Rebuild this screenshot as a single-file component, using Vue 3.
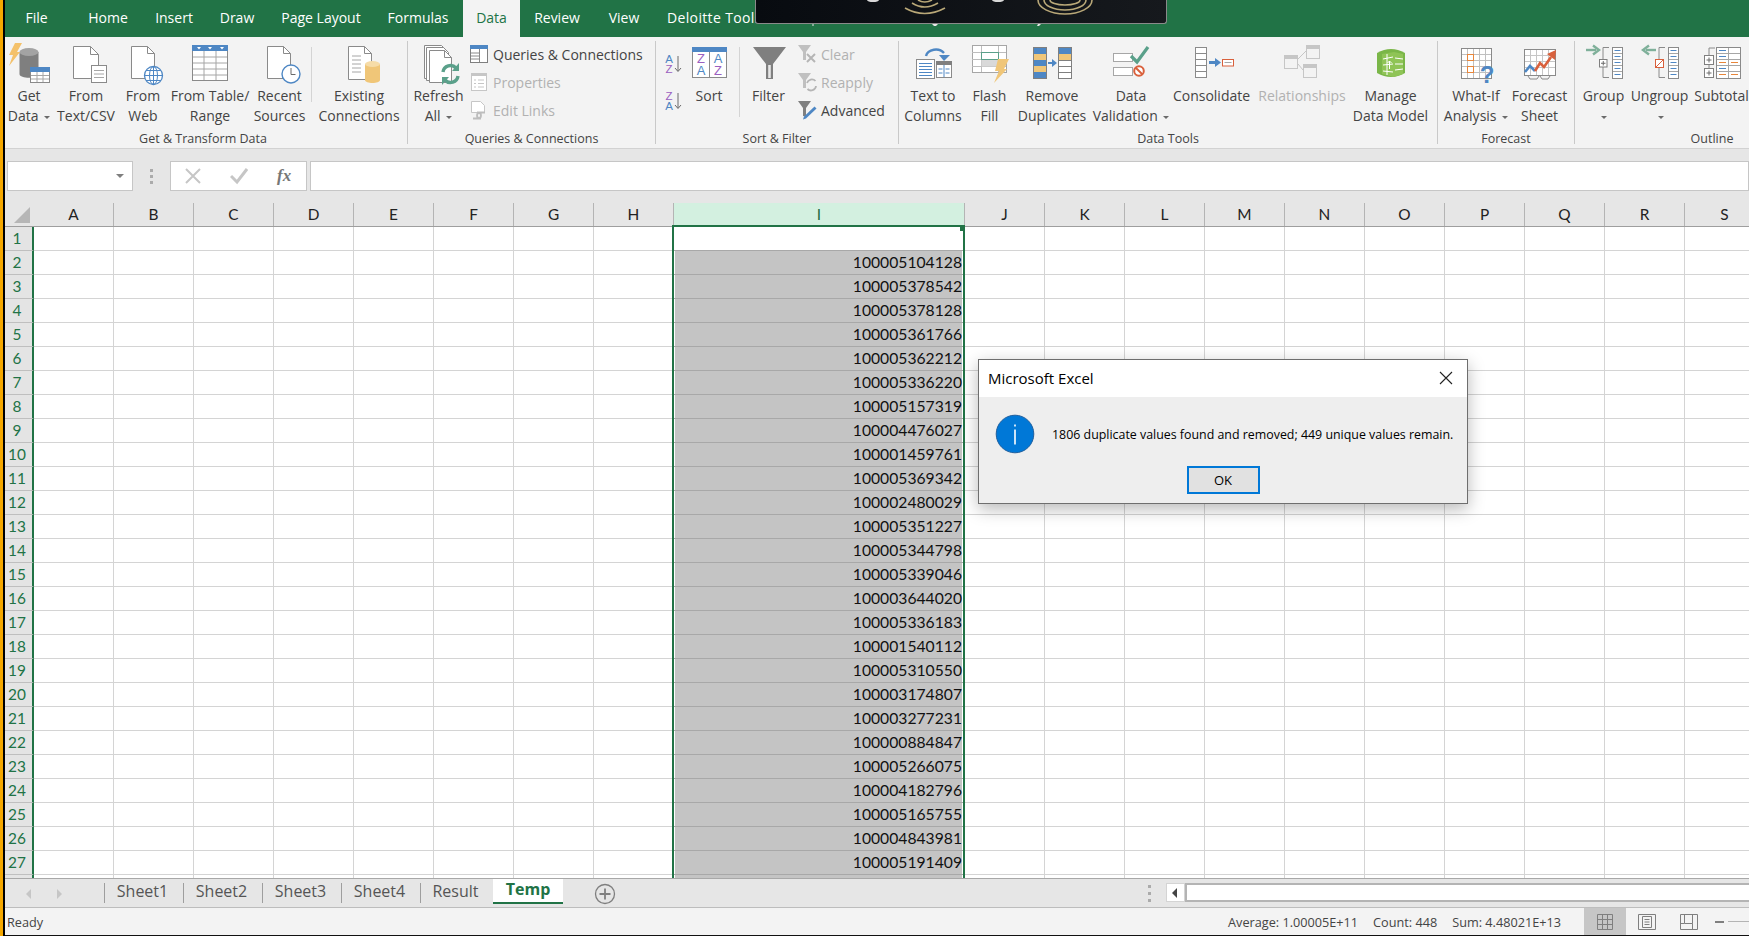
<script setup>
const tabs = [
  { t: 'File', w: 63 }, { t: 'Home', w: 80 }, { t: 'Insert', w: 52 }, { t: 'Draw', w: 74 },
  { t: 'Page Layout', w: 94 }, { t: 'Formulas', w: 95, pl: 5 }, { t: 'Data', w: 57, active: true },
  { t: 'Review', w: 74 }, { t: 'View', w: 60 }, { t: 'Deloitte Tools', w: 120, pl: 13, left: true }
]
const cols = ['A','B','C','D','E','F','G','H','I','J','K','L','M','N','O','P','Q','R','S']
const values = ['', '100005104128','100005378542','100005378128','100005361766','100005362212','100005336220','100005157319','100004476027','100001459761','100005369342','100002480029','100005351227','100005344798','100005339046','100003644020','100005336183','100001540112','100005310550','100003174807','100003277231','100000884847','100005266075','100004182796','100005165755','100004843981','100005191409','']
const sheets = ['Sheet1','Sheet2','Sheet3','Sheet4','Result']
const stripes = [0, 1, 2, 3, 4]
</script>

<template>
  <div class="app">
    <div class="edge"></div>
    <div class="main">
      <header class="titlebar">
        <div
          v-for="tab in tabs" :key="tab.t"
          class="tab" :class="{ active: tab.active, left: tab.left }"
          :style="{ width: tab.w + 'px', paddingLeft: (tab.pl || 0) + 'px' }"
        >{{ tab.t }}</div>
        <div class="overlay">
          <svg class="overlay-art" width="412" height="27" viewBox="755 0 412 27">
            <g fill="none" stroke="#b9a878" stroke-width="1.6">
              <path d="M904 8Q923.5 19 944 8M911 3Q923.5 11 937 3M917 0Q923.5 4 931 0"/>
              <path d="M1037 0a27 14 0 0 0 54 0M1043 0a21 10 0 0 0 42 0M1049 0a15 5 0 0 0 30 0"/>
            </g>
            <ellipse cx="872" cy="0" rx="6" ry="2" fill="#d8d8d8"/>
            <ellipse cx="997" cy="0" rx="6" ry="2" fill="#d8d8d8"/>
            <path d="M811.5 24h1v2h-1zM931 24h6l-2 2h-2zM1037 24h3l-2 2h-2z" fill="#e8e8e8"/>
          </svg>
        </div>
      </header>

      <section class="ribbon">
        <!-- Get & Transform Data -->
        <div class="group g1">
          <div class="btns">
            <div class="big w-get">
              <svg class="ico" viewBox="0 0 44 45">
                <path d="M12.5 11v22c0 5 19 5 19 0V11z" fill="#7f7f7f"/>
                <ellipse cx="22" cy="11" rx="9.5" ry="4" fill="#a3a3a3"/>
                <polygon points="8,2 15,2 10,11 13,11 2,25 6,14 2,14" fill="#f4c16a"/>
                <rect x="23.5" y="26.5" width="19" height="15" fill="#fff" stroke="#8a8a8a"/>
                <rect x="23" y="26" width="20" height="5" fill="#4e87c4"/>
                <path d="M30 31v10M36 31v10M24 34.5h18M24 38h18" stroke="#a6a6a6" fill="none"/>
              </svg>
              <span class="lbl">Get<br>Data <i class="caret"></i></span>
            </div>
            <div class="big w-text">
              <svg class="ico" viewBox="0 0 44 45">
                <path d="M9.5 5.5h17l8 8v24h-25z" fill="#fff" stroke="#8a8a8a"/>
                <path d="M26.5 5.5v8h8" fill="none" stroke="#8a8a8a"/>
                <rect x="27.5" y="24.5" width="15" height="17" fill="#fff" stroke="#8a8a8a"/>
                <path d="M30 29.5h10M30 33h10M30 36.5h10" stroke="#a6a6a6"/>
              </svg>
              <span class="lbl">From<br>Text/CSV</span>
            </div>
            <div class="big w-web">
              <svg class="ico" viewBox="0 0 44 45">
                <path d="M10.5 5.5h16l7 7v25h-23z" fill="#fff" stroke="#8a8a8a"/>
                <path d="M26.5 5.5v7h7" fill="none" stroke="#8a8a8a"/>
                <circle cx="32.5" cy="34.5" r="9" fill="#fff" stroke="#4e87c4" stroke-width="1.3"/>
                <ellipse cx="32.5" cy="34.5" rx="4" ry="9" fill="none" stroke="#4e87c4"/>
                <path d="M32.5 25.5v18M23.5 34.5h18M25 29.5h15M25 39.5h15" stroke="#4e87c4" fill="none"/>
              </svg>
              <span class="lbl">From<br>Web</span>
            </div>
            <div class="big w-table">
              <svg class="ico" viewBox="0 0 44 45">
                <rect x="4.5" y="4.5" width="35" height="35" fill="#fff" stroke="#8a8a8a"/>
                <rect x="4" y="4" width="36" height="6" fill="#4e87c4"/>
                <path d="M9 6h4l-2 2.5zM20 6h4l-2 2.5zM32 6h4l-2 2.5z" fill="#fff"/>
                <path d="M16 10v29M28 10v29M5 16h34M5 22h34M5 28h34M5 34h34" stroke="#a6a6a6" fill="none"/>
              </svg>
              <span class="lbl">From Table/<br>Range</span>
            </div>
            <div class="big w-recent">
              <svg class="ico" viewBox="0 0 44 45">
                <path d="M9.5 5.5h16l7 7v25h-23z" fill="#fff" stroke="#8a8a8a"/>
                <path d="M25.5 5.5v7h7" fill="none" stroke="#8a8a8a"/>
                <circle cx="33" cy="33" r="9" fill="#fff" stroke="#4e87c4" stroke-width="1.4"/>
                <path d="M33 27v6.5h4.5" fill="none" stroke="#6a6a6a"/>
              </svg>
              <span class="lbl">Recent<br>Sources</span>
            </div>
            <div class="vsep"></div>
            <div class="big w-exist">
              <svg class="ico" viewBox="0 0 44 45">
                <path d="M11.5 5.5h16l7 7v26h-23z" fill="#fff" stroke="#8a8a8a"/>
                <path d="M27.5 5.5v7h7" fill="none" stroke="#8a8a8a"/>
                <path d="M15 15h9M15 19h9M15 23h9M15 27h9M15 31h9" stroke="#a6a6a6"/>
                <path d="M28 23v16c0 4 15 4 15 0V23z" fill="#f0c678"/>
                <ellipse cx="35.5" cy="23" rx="7.5" ry="3" fill="#f6dca8"/>
              </svg>
              <span class="lbl">Existing<br>Connections</span>
            </div>
          </div>
          <div class="glabel">Get &amp; Transform Data</div>
        </div>

        <!-- Queries & Connections -->
        <div class="group g2">
          <div class="btns">
            <div class="big w-refresh">
              <svg class="ico" viewBox="0 0 44 45">
                <path d="M7.5 4.5h17l5 5v28h-22z" fill="#fff" stroke="#8a8a8a"/>
                <path d="M9.5 6.5h17l5 5v28h-22z" fill="#fff" stroke="#8a8a8a"/>
                <path d="M12.5 9.500h15l7 7v25h-22z" fill="#fff" stroke="#8a8a8a"/>
                <path d="M27.500 9.500v7h7" fill="none" stroke="#8a8a8a"/>
                <path d="M26 31a7.500 7.500 0 0 1 13-4" fill="none" stroke="#5aa08a" stroke-width="3.400"/>
                <path d="M41 35a7.500 7.500 0 0 1-13 4" fill="none" stroke="#5aa08a" stroke-width="3.400"/>
                <path d="M42 22v8h-7zM25 44v-8h7z" fill="#5aa08a"/>
              </svg>
              <span class="lbl">Refresh<br>All <i class="caret"></i></span>
            </div>
            <div class="smalls">
              <div class="small">
                <svg class="sico" viewBox="0 0 20 20">
                  <rect x="1.500" y="1.500" width="17" height="17" fill="#fff" stroke="#7f7f7f"/>
                  <rect x="1" y="1" width="18" height="4" fill="#4e87c4"/>
                  <path d="M10.500 5v13M2 9h8M2 12h8M2 15h8" stroke="#8a8a8a" fill="none"/>
                </svg>
                <span>Queries &amp; Connections</span>
              </div>
              <div class="small off">
                <svg class="sico" viewBox="0 0 20 20">
                  <rect x="2.500" y="1.500" width="15" height="17" fill="#fff" stroke="#c6c6c6"/>
                  <rect x="2" y="1" width="16" height="3" fill="#c6c6c6"/>
                  <path d="M5 8h2M9 8h6M5 11.500h2M9 11.500h6M5 15h2M9 15h6" stroke="#c6c6c6" fill="none"/>
                </svg>
                <span>Properties</span>
              </div>
              <div class="small off">
                <svg class="sico" viewBox="0 0 20 20">
                  <path d="M2.500 1.500h9l4 4v7h-13z" fill="#fff" stroke="#c6c6c6"/>
                  <path d="M4 18.500h5a3 3 0 0 0 0-6H8M16 12.500h-5a3 3 0 0 0 0 6h1" fill="none" stroke="#bdbdbd" stroke-width="1.800"/>
                </svg>
                <span>Edit Links</span>
              </div>
            </div>
          </div>
          <div class="glabel">Queries &amp; Connections</div>
        </div>

        <!-- Sort & Filter -->
        <div class="group g3">
          <div class="btns">
            <div class="azcol">
              <svg class="az" viewBox="0 0 20 22">
                <text x="6" y="10" class="azt blue">A</text>
                <text x="6" y="20" class="azt purple">Z</text>
                <path d="M15 3v15M12 15l3 3.500 3-3.500" fill="none" stroke="#6a6a6a"/>
              </svg>
              <svg class="az" viewBox="0 0 20 22">
                <text x="6" y="10" class="azt purple">Z</text>
                <text x="6" y="20" class="azt blue">A</text>
                <path d="M15 3v15M12 15l3 3.500 3-3.500" fill="none" stroke="#6a6a6a"/>
              </svg>
            </div>
            <div class="big w-sort">
              <svg class="ico" viewBox="0 0 44 45">
                <rect x="5.500" y="6.500" width="34" height="30" fill="#fff" stroke="#8a8a8a"/>
                <rect x="5" y="6" width="35" height="5" fill="#4e87c4"/>
                <path d="M22.500 11v25" stroke="#8a8a8a"/>
                <text x="14" y="22" class="sorttxt purple">Z</text>
                <text x="31" y="22" class="sorttxt blue">A</text>
                <text x="14" y="34" class="sorttxt blue">A</text>
                <text x="31" y="34" class="sorttxt purple">Z</text>
              </svg>
              <span class="lbl">Sort<br>&nbsp;</span>
            </div>
            <div class="vsep tall"></div>
            <div class="big w-filter">
              <svg class="ico" viewBox="0 0 44 45">
                <path d="M6 6h33L26 23v15h-7V23z" fill="#7f7f7f"/>
                <path d="M21.200 24v13h2.600V24z" fill="#e8e8e8"/>
              </svg>
              <span class="lbl">Filter<br>&nbsp;</span>
            </div>
            <div class="smalls">
              <div class="small">
                <svg class="sico" viewBox="0 0 20 20">
                  <path d="M1 1h13L9 8v8H6V8z" fill="#c0c0c0"/>
                  <path d="M10 10l8 8M18 10l-8 8" stroke="#b5b5b5" stroke-width="2"/>
                </svg>
                <span class="offt">Clear</span>
              </div>
              <div class="small">
                <svg class="sico" viewBox="0 0 20 20">
                  <path d="M1 1h13L9 8v8H6V8z" fill="#c0c0c0"/>
                  <path d="M10 11a5 5 0 0 1 8.500-2M19 14a5 5 0 0 1-8.500 3" fill="none" stroke="#b5b5b5" stroke-width="1.800"/>
                </svg>
                <span class="offt">Reapply</span>
              </div>
              <div class="small">
                <svg class="sico" viewBox="0 0 20 20">
                  <path d="M1 1h13L9 8v8H6V8z" fill="#7f7f7f"/>
                  <path d="M17.500 6.500l2 2L9 18.500l-3 1 1-3z" fill="#4e87c4"/>
                </svg>
                <span>Advanced</span>
              </div>
            </div>
          </div>
          <div class="glabel">Sort &amp; Filter</div>
        </div>

        <!-- Data Tools -->
        <div class="group g4">
          <div class="btns">
            <div class="big w-t2c">
              <svg class="ico" viewBox="0 0 44 45">
                <rect x="5.500" y="18.500" width="18" height="19" fill="#fff" stroke="#8a8a8a"/>
                <path d="M8 22.500h13M8 25.500h13M8 28.500h13M8 31.500h13M8 34.500h13" stroke="#4e87c4"/>
                <rect x="25.500" y="20.500" width="15" height="16" fill="#fff" stroke="#8a8a8a"/>
                <rect x="25" y="20" width="16" height="4" fill="#7f7f7f"/>
                <path d="M33 24v12M27.500 28h4M34.500 28h4M27.500 32h4M34.500 32h4" stroke="#4e87c4" fill="none"/>
                <path d="M15 15a10 8 0 0 1 18-3" fill="none" stroke="#4e87c4" stroke-width="2.400"/>
                <path d="M28 14h11l-6 6z" fill="#4e87c4"/>
              </svg>
              <span class="lbl">Text to<br>Columns</span>
            </div>
            <div class="big w-flash">
              <svg class="ico" viewBox="0 0 44 45">
                <rect x="4.500" y="4.500" width="34" height="27" fill="#fff" stroke="#a6a6a6"/>
                <path d="M4 11.500h34M4 18.500h34M4 25.500h34M13.500 5v26M30.500 5v26" stroke="#bdbdbd" fill="none"/>
                <rect x="13.500" y="18.500" width="17" height="7" fill="#d9d9d9"/>
                <rect x="13.500" y="11.500" width="17" height="7" fill="#fff" stroke="#5aa08a"/>
                <polygon points="30,18 41,18 36,28 39,28 26,42 31,30 27,30" fill="#f0c678"/>
              </svg>
              <span class="lbl">Flash<br>Fill</span>
            </div>
            <div class="big w-remove">
              <svg class="ico" viewBox="0 0 44 45">
                <rect x="3.500" y="6.500" width="13" height="31" fill="#4e87c4" stroke="#7f7f7f"/>
                <rect x="4" y="13" width="12" height="6" fill="#f0c678"/>
                <rect x="4" y="25" width="12" height="6" fill="#f0c678"/>
                <rect x="28.500" y="6.500" width="13" height="31" fill="#fff" stroke="#7f7f7f"/>
                <rect x="29" y="7" width="12" height="6" fill="#4e87c4"/>
                <rect x="29" y="13" width="12" height="6" fill="#f0c678"/>
                <path d="M29 19.500h12M29 25.500h12M29 31.500h12" stroke="#7f7f7f"/>
                <path d="M18 22h5" stroke="#4e87c4" stroke-width="2"/>
                <path d="M22 18l5 4-5 4z" fill="#4e87c4"/>
              </svg>
              <span class="lbl">Remove<br>Duplicates</span>
            </div>
            <div class="big w-valid">
              <svg class="ico" viewBox="0 0 44 45">
                <rect x="4.500" y="12.500" width="19" height="8" fill="#fff" stroke="#a6a6a6"/>
                <rect x="4.500" y="26.500" width="19" height="8" fill="#fff" stroke="#a6a6a6"/>
                <path d="M22 15l6 6 11-15" fill="none" stroke="#5aa08a" stroke-width="3.200"/>
                <circle cx="30" cy="30" r="4.800" fill="#fff" stroke="#d9603c" stroke-width="2"/>
                <path d="M26.500 26.500l7 7" stroke="#d9603c" stroke-width="2"/>
              </svg>
              <span class="lbl">Data<br>Validation <i class="caret"></i></span>
            </div>
            <div class="big w-consol">
              <svg class="ico" viewBox="0 0 44 45">
                <rect x="5.500" y="6.500" width="11" height="30" fill="#fff" stroke="#8a8a8a"/>
                <path d="M6 12.500h10M6 18.500h10M6 24.500h10M6 30.500h10" stroke="#8a8a8a"/>
                <path d="M19 21.500h7" stroke="#4e87c4" stroke-width="3"/>
                <path d="M25 17l6 4.500-6 4.500z" fill="#4e87c4"/>
                <rect x="32.500" y="18.500" width="11" height="6.500" fill="#fff" stroke="#d9603c"/>
                <path d="M34.500 21.500h7" stroke="#a6a6a6"/>
              </svg>
              <span class="lbl">Consolidate<br>&nbsp;</span>
            </div>
            <div class="big w-rel off">
              <svg class="ico" viewBox="0 0 44 45">
                <rect x="4.500" y="14.500" width="13" height="13" fill="#f3f3f3" stroke="#c6c6c6"/>
                <rect x="4" y="14" width="14" height="4" fill="#c6c6c6"/>
                <rect x="26.500" y="4.500" width="13" height="13" fill="#f3f3f3" stroke="#c6c6c6"/>
                <rect x="26" y="4" width="14" height="4" fill="#c6c6c6"/>
                <rect x="23.500" y="23.500" width="13" height="13" fill="#f3f3f3" stroke="#c6c6c6"/>
                <rect x="23" y="23" width="14" height="4" fill="#c6c6c6"/>
                <path d="M18 18l8-8M18 23l5 6" stroke="#c6c6c6" fill="none"/>
              </svg>
              <span class="lbl">Relationships<br>&nbsp;</span>
            </div>
            <div class="big w-manage">
              <svg class="ico" viewBox="0 0 44 45">
                <path d="M8 12q14-8 28 0v20q-14 8-28 0z" fill="#7ab648"/>
                <path d="M13 13l12-2v25l-12-3zM25 11l9 2v20l-9 3z" fill="#8fc456"/>
                <path d="M14 18l10-2M14 24l10-1M14 30l10 1M26 17l8 1M26 23l8 0M26 29l8-1M18 13v21" stroke="#fff" fill="none"/>
                <path d="M20.500 28v-8M18.500 22l2-2 2 2" stroke="#fff" fill="none"/>
              </svg>
              <span class="lbl">Manage<br>Data Model</span>
            </div>
          </div>
          <div class="glabel">Data Tools</div>
        </div>

        <!-- Forecast -->
        <div class="group g5">
          <div class="btns">
            <div class="big w-whatif">
              <svg class="ico" viewBox="0 0 44 45">
                <rect x="7.500" y="7.500" width="30" height="30" fill="#fff" stroke="#8a8a8a"/>
                <path d="M13.500 8v29M19.500 8v29M25.500 8v29M31.500 8v29M8 13.500h29M8 19.500h29M8 25.500h29M8 31.500h29" stroke="#c0c0c0" fill="none"/>
                <rect x="13.500" y="13.500" width="6" height="6" fill="#fff" stroke="#e8863a"/>
                <rect x="13.500" y="25.500" width="6" height="6" fill="#fff" stroke="#e8863a"/>
                <text x="33" y="42" class="qmark">?</text>
              </svg>
              <span class="lbl">What-If<br>Analysis <i class="caret"></i></span>
            </div>
            <div class="big w-forecast">
              <svg class="ico" viewBox="0 0 44 45">
                <rect x="6.500" y="8.500" width="31" height="26" fill="#fff" stroke="#8a8a8a"/>
                <path d="M12.500 9v25M18.500 9v25M24.500 9v25M30.500 9v25M7 14.500h30M7 20.500h30M7 26.500h30" stroke="#c6c6c6" fill="none"/>
                <path d="M7 31l5-6 5 5" fill="none" stroke="#4e87c4" stroke-width="2.600"/>
                <path d="M17 30l5-8 4 4 7-10" fill="none" stroke="#d9603c" stroke-width="2.600"/>
                <path d="M29 13l9-4-1 10z" fill="#d9603c"/>
                <path d="M10 35l2 3h7l2-3M22 35l2 3h6l2-3" fill="none" stroke="#8a8a8a"/>
              </svg>
              <span class="lbl">Forecast<br>Sheet</span>
            </div>
          </div>
          <div class="glabel">Forecast</div>
        </div>

        <!-- Outline -->
        <div class="group g6">
          <div class="btns">
            <div class="big w-grp">
              <svg class="ico" viewBox="0 0 44 45">
                <path d="M4 9h10" stroke="#7fb09a" stroke-width="2.400"/>
                <path d="M11 4.500L17 9l-6 4.500" fill="none" stroke="#7fb09a" stroke-width="2.400"/>
                <path d="M27 6.500h-6v30h6M21 18v8" fill="none" stroke="#8a8a8a"/>
                <rect x="17.500" y="18.500" width="7.500" height="7.500" fill="#fff" stroke="#7f7f7f"/>
                <path d="M19 22.250h4.500M21.250 20v4.500" stroke="#6a6a6a"/>
                <rect x="30.500" y="6.500" width="10" height="31" fill="#fff" stroke="#8a8a8a"/>
                <path d="M31 12.500h9M31 18.500h9M31 24.500h9M31 30.500h9" stroke="#a6a6a6"/>
                <path v-for="i in stripes" :key="i" :d="`M32.500 ${9.5 + i * 6}h6`" stroke="#4e87c4"/>
              </svg>
              <span class="lbl">Group<br><i class="caret"></i></span>
            </div>
            <div class="big w-ungrp">
              <svg class="ico" viewBox="0 0 44 45">
                <path d="M8 9h10" stroke="#7fb09a" stroke-width="2.400"/>
                <path d="M11 4.500L5 9l6 4.500" fill="none" stroke="#7fb09a" stroke-width="2.400"/>
                <path d="M27 6.500h-6v30h6" fill="none" stroke="#8a8a8a"/>
                <rect x="17.500" y="18.500" width="8" height="8" fill="#fff" stroke="#d9603c"/>
                <path d="M18 26l7-7" stroke="#d9603c"/>
                <rect x="30.500" y="6.500" width="10" height="31" fill="#fff" stroke="#8a8a8a"/>
                <path d="M31 12.500h9M31 18.500h9M31 24.500h9M31 30.500h9" stroke="#a6a6a6"/>
                <path v-for="i in stripes" :key="i" :d="`M32.500 ${9.5 + i * 6}h6`" stroke="#4e87c4"/>
              </svg>
              <span class="lbl">Ungroup<br><i class="caret"></i></span>
            </div>
            <div class="big w-subt">
              <svg class="ico" viewBox="0 0 44 45">
                <rect x="4.500" y="14.500" width="9" height="9" fill="#fff" stroke="#7f7f7f"/>
                <rect x="4.500" y="27.500" width="9" height="9" fill="#fff" stroke="#7f7f7f"/>
                <path d="M6.500 19h5M9 16.500v5M6.500 32h5M9 29.500v5" stroke="#6a6a6a"/>
                <path d="M15 7h-6v7M9 24v3" fill="none" stroke="#8a8a8a"/>
                <rect x="16.500" y="6.500" width="24" height="31" fill="#fff" stroke="#8a8a8a"/>
                <path d="M28.500 7v30M17 12.500h23M17 18.500h23M17 24.500h23M17 30.500h23" stroke="#a6a6a6"/>
                <path d="M19 9.500h7M19 15.500h7M19 27.500h7" stroke="#4e87c4"/>
                <path d="M19 21.500h7M31 21.500h7M19 33.500h7M31 33.500h7" stroke="#e8863a"/>
              </svg>
              <span class="lbl">Subtotal<br>&nbsp;</span>
            </div>
          </div>
          <div class="glabel">Outline</div>
        </div>
      </section>

      <section class="formula">
        <div class="namebox"><i class="fcaret"></i></div>
        <div class="dots"><i></i><i></i><i></i></div>
        <div class="fbtns">
          <svg class="fb x" width="18" height="18" viewBox="0 0 18 18"><path d="M2 2l14 14M16 2L2 16" stroke="#c6c6c6" stroke-width="2"/></svg>
          <svg class="fb c" width="18" height="18" viewBox="0 0 18 18"><path d="M1 9l6 6L17 2" fill="none" stroke="#c6c6c6" stroke-width="3"/></svg>
          <span class="fx">fx</span>
        </div>
        <div class="finput"></div>
      </section>

      <section class="sheet">
        <div class="colrow">
          <div class="corner"><i></i></div>
          <div v-for="c in cols" :key="c" class="colh" :class="{ wide: c === 'I', sel: c === 'I' }">{{ c }}</div>
        </div>
        <div class="rows">
          <div v-for="(v, r) in values" :key="r" class="row">
            <div class="rowh">{{ r < 27 ? r + 1 : '' }}</div>
            <div
              v-for="c in cols" :key="c"
              class="cell"
              :class="{ wide: c === 'I', filled: c === 'I' && r > 0, first: c === 'I' && r === 0 }"
            >{{ c === 'I' ? v : '' }}</div>
          </div>
        </div>
        <div class="selection"><i class="handle"></i></div>
      </section>

      <section class="tabbar">
        <div class="nav">
          <i class="navl"></i><i class="navr"></i>
        </div>
        <div v-for="s in sheets" :key="s" class="stab" :class="{ short: s === 'Result' }">{{ s }}</div>
        <div class="stab cur">Temp</div>
        <div class="plus">
          <svg width="22" height="22" viewBox="0 0 22 22">
            <circle cx="11" cy="11" r="9.500" fill="none" stroke="#7f7f7f" stroke-width="1.300"/>
            <path d="M11 5.500v11M5.500 11h11" stroke="#7f7f7f" stroke-width="1.800"/>
          </svg>
        </div>
        <div class="dots hdots"><i></i><i></i><i></i></div>
        <div class="hscroll">
          <div class="scrollbtn"><i></i></div>
          <div class="scrolltrack"></div>
        </div>
      </section>

      <footer class="status">
        <span class="ready">Ready</span>
        <div class="stats">
          <span>Average: 1.00005E+11</span>
          <span>Count: 448</span>
          <span>Sum: 4.48021E+13</span>
        </div>
        <div class="view on">
          <svg width="16" height="16" viewBox="0 0 16 16"><path d="M.5.500h15v15H.5zM5.500.500v15M10.500.500v15M.5 5.500h15M.5 10.500h15" fill="none" stroke="#7f7f7f"/></svg>
        </div>
        <div class="view">
          <svg width="18" height="16" viewBox="0 0 18 16"><path d="M.5.500h17v15H.5zM4.500 2.500h9v11h-9zM6.500 5.500h5M6.500 8h5M6.500 10.500h5" fill="none" stroke="#7f7f7f"/></svg>
        </div>
        <div class="view">
          <svg width="18" height="16" viewBox="0 0 18 16"><path d="M.5.500h17v15H.5zM4.500.500v9h8v-9M12.500 9.500v6M.5 9.500h4" fill="none" stroke="#7f7f7f"/></svg>
        </div>
        <div class="zoom"><i class="minus"></i><i class="slide"></i></div>
      </footer>
    </div>

    <div class="dialog">
      <div class="dtitle">
        <span>Microsoft Excel</span>
        <svg width="14" height="14" viewBox="0 0 14 14"><path d="M1 1l12 12M13 1L1 13" stroke="#222" stroke-width="1.100"/></svg>
      </div>
      <div class="dbody">
        <div class="dmsg">
          <svg width="40" height="40" viewBox="0 0 40 40">
            <circle cx="20" cy="20" r="18.800" fill="#0078d7" stroke="#1f5f9e"/>
            <rect x="19.200" y="15.500" width="1.600" height="15" fill="#fff"/>
            <rect x="19.200" y="10.500" width="1.600" height="2" fill="#fff"/>
          </svg>
          <span>1806 duplicate values found and removed; 449 unique values remain.</span>
        </div>
        <div class="dok">OK</div>
      </div>
    </div>
  </div>
</template>

<style>
html, body { margin: 0; padding: 0; background: #fff; overflow: hidden; }
</style>

<style scoped>
.app {
  position: relative;
  width: 1749px;
  height: 936px;
  display: flex;
  overflow: hidden;
  font-family: "Open Sans", "Noto Sans", sans-serif;
  font-size: 14px;
  color: #444;
}
.edge { flex: none; width: 2px; background: #000; border-left: 3px solid #f5a800; }
.main { flex: none; width: 1744px; height: 936px; display: flex; flex-direction: column; border-bottom: 1px solid #111; box-sizing: border-box; }

/* title */
.titlebar { position: relative; flex: none; height: 37px; background: #217346; display: flex; color: #fff; }
.tab { flex: none; box-sizing: border-box; display: flex; align-items: center; justify-content: center; padding-bottom: 2px; white-space: nowrap; font-size: 14px; }
.tab.left { justify-content: flex-start; letter-spacing: 0.35px; }
.tab.active { background: #f3f3f3; color: #217346; }
.overlay {
  position: absolute; left: 750px; top: 0; width: 410px; height: 23px;
  background: linear-gradient(90deg, #080b10, #16191d);
  border: 1px solid #8a8a8a; border-top: none; border-radius: 0 0 3px 3px;
}
.overlay-art { display: block; overflow: visible; }

/* ribbon */
.ribbon { flex: none; height: 112px; box-sizing: border-box; background: #f3f3f3; border-bottom: 1px solid #d2d2d2; display: flex; padding-top: 4px; }
.group { flex: none; display: flex; flex-direction: column; box-sizing: border-box; height: 103px; border-right: 1px solid #c9c9c9; }
.g1 { width: 403px; }
.g2 { width: 248px; }
.g3 { width: 243px; }
.g4 { width: 539px; }
.g5 { width: 137px; }
.g6 { width: 274px; border-right: none; }
.btns { display: flex; height: 89px; flex: none; }
.glabel { text-align: center; font-size: 12.5px; line-height: 16px; height: 14px; white-space: nowrap; margin-top: 1px; }
.g1 .glabel { padding-right: 6px; }
.big { flex: none; display: flex; flex-direction: column; align-items: center; }
.ico { flex: none; display: block; width: 44px; height: 45px; }
.lbl { flex: none; line-height: 20px; text-align: center; white-space: nowrap; }
.off, .off .lbl, .offt { color: #b1b1b1; }
.caret { display: inline-block; width: 0; height: 0; border: 3px solid transparent; border-top: 3.5px solid #6a6a6a; border-bottom: none; vertical-align: middle; margin-left: 2px; }
.w-get { width: 48px; }
.w-text { width: 66px; }
.w-web { width: 48px; }
.w-table { width: 86px; }
.w-recent { width: 53px; }
.vsep { flex: none; width: 1px; background: #d4d4d4; height: 55px; margin: 6px 0 0 5px; }
.vsep.tall { height: 70px; margin: 6px 0 0 11px; }
.w-exist { width: 94px; }
.w-refresh { width: 61px; }
.smalls { display: flex; flex-direction: column; flex: none; margin-top: -1px; }
.small { height: 28px; display: flex; align-items: center; white-space: nowrap; gap: 4px; }
.sico { width: 20px; height: 20px; flex: none; }
.azcol { width: 34px; flex: none; display: flex; flex-direction: column; align-items: center; padding-top: 12px; gap: 15px; box-sizing: border-box; }
.az { width: 20px; height: 22px; flex: none; }
.azt { font: 11.5px "Liberation Sans", sans-serif; text-anchor: middle; }
.blue { fill: #4e87c4; }
.purple { fill: #9a5fc0; }
.sorttxt { font: 13px "Liberation Sans", sans-serif; text-anchor: middle; }
.qmark { font: bold 24px "Liberation Sans", sans-serif; fill: #4e87c4; text-anchor: middle; }
.w-sort { width: 38px; }
.w-filter { width: 57px; }
.w-t2c { width: 68px; }
.w-flash { width: 45px; }
.w-remove { width: 80px; }
.w-valid { width: 78px; }
.w-consol { width: 83px; }
.w-rel { width: 98px; }
.w-manage { width: 79px; }
.w-whatif { width: 76px; }
.w-forecast { width: 51px; }
.w-grp { width: 57px; }
.w-ungrp { width: 55px; }
.w-subt { width: 69px; }

/* formula bar */
.formula { flex: none; height: 54px; box-sizing: border-box; background: #e6e6e6; display: flex; align-items: center; padding: 0 0 0 2px; }
.namebox { flex: none; width: 126px; height: 30px; box-sizing: border-box; background: #fff; border: 1px solid #c6c6c6; position: relative; }
.fcaret { position: absolute; right: 8px; top: 12px; width: 0; height: 0; border: 4px solid transparent; border-top: 4.5px solid #7f7f7f; border-bottom: none; }
.dots { flex: none; width: 37px; display: flex; flex-direction: column; align-items: center; gap: 3px; }
.dots i { width: 3px; height: 3px; background: #ababab; display: block; }
.fbtns { flex: none; width: 137px; height: 30px; box-sizing: border-box; background: #fff; border: 1px solid #c6c6c6; display: flex; align-items: center; }
.fb.x { margin-left: 13px; }
.fb.c { margin-left: 28px; }
.fx { margin-left: 29px; font: italic bold 17px "Liberation Serif", serif; color: #777; }
.finput { flex: none; width: 1439px; margin-left: 3px; height: 30px; box-sizing: border-box; background: #fff; border: 1px solid #c6c6c6; }

/* sheet */
.sheet { flex: 1; min-height: 0; position: relative; overflow: hidden; background: #fff; font-family: Lato, "Open Sans", sans-serif; }
.colrow { height: 24px; display: flex; background: #e6e6e6; box-sizing: border-box; border-bottom: 1px solid #9e9e9e; }
.corner { flex: none; width: 29px; position: relative; }
.corner i { position: absolute; left: 9px; top: 4px; width: 0; height: 0; border-style: solid; border-width: 0 0 16px 16px; border-color: transparent transparent #b6b6b6 transparent; }
.colh { flex: none; width: 80px; box-sizing: border-box; border-right: 1px solid #b4b4b4; text-align: center; font-size: 15.4px; line-height: 22px; color: #222; }
.colh.wide, .cell.wide { width: 291px; }
.colh.sel { background: #d3f0e0; color: #1d6b41; }
.rows { display: flex; flex-direction: column; }
.row { flex: none; height: 24px; display: flex; }
.rowh { flex: none; width: 29px; box-sizing: border-box; background: #e4e4e4; border-right: 2px solid #217346; border-bottom: 1px solid #bfbfbf; text-align: center; font-size: 15.4px; line-height: 22px; color: #217346; padding-right: 3px; }
.cell { flex: none; width: 80px; box-sizing: border-box; border-right: 1px solid #d4d4d4; border-bottom: 1px solid #d4d4d4; }
.cell.wide { border-right: none; border-bottom-color: #a8a8a8; padding: 0 4px 0 1px; }
.cell.filled { background-clip: content-box; background-color: #c4c4c4; text-align: right; font-size: 15.7px; line-height: 22px; color: #111; padding-right: 3px; }
.cell.first { border-bottom-color: #a8a8a8; }
.selection { position: absolute; left: 667px; top: 22px; width: 293px; height: 700px; box-sizing: border-box; border: 2px solid #217346; pointer-events: none; }
.handle { position: absolute; right: -2px; top: -1px; width: 5px; height: 5px; background: #217346; }

/* tabs */
.tabbar { flex: none; height: 30px; box-sizing: border-box; background: #e6e6e6; border-top: 1px solid #a8a8a8; border-bottom: 1px solid #bdbdbd; display: flex; }
.nav { flex: none; width: 99px; position: relative; }
.navl, .navr { position: absolute; top: 10px; width: 0; height: 0; border: 5px solid transparent; }
.navl { left: 21px; border-right: 5px solid #c6c6c6; border-left: none; }
.navr { left: 52px; border-left: 5px solid #c6c6c6; border-right: none; }
.stab { flex: none; width: 79px; height: 20px; margin-top: 4px; padding-right: 3px; line-height: 16px; text-align: center; font-size: 16px; border-left: 1px solid #9e9e9e; box-sizing: border-box; color: #555; }
.stab.short { width: 73px; }
.stab.cur { width: 70px; height: 25px; margin-top: 0; padding-right: 0; line-height: 21px; background: #fff; color: #217346; font-weight: 700; border-left: none; border-bottom: 2px solid #217346; }
.plus { flex: none; width: 22px; height: 22px; margin: 4px 0 0 31px; }
.hdots { width: 40px; margin-left: 513px; margin-top: 6px; gap: 4px; justify-content: flex-start; }
.hscroll { flex: none; display: flex; height: 19px; margin-top: 4px; margin-left: -3px; }
.scrollbtn { width: 19px; background: #fff; border: 1px solid #d4d4d4; box-sizing: border-box; position: relative; }
.scrollbtn i { position: absolute; left: 5px; top: 4px; border: 5px solid transparent; border-right: 5px solid #444; border-left: none; width: 0; height: 0; }
.scrolltrack { width: 570px; background: #fff; border: 2px solid #b4b4b4; border-right: none; box-sizing: border-box; }

/* status */
.status { flex: none; height: 27px; background: #f3f3f3; display: flex; align-items: stretch; font-size: 12.7px; color: #444; }
.ready { padding-left: 2px; align-self: center; }
.stats { margin-left: auto; margin-right: 23px; display: flex; gap: 15px; align-self: center; }
.view { flex: none; width: 42px; display: flex; align-items: center; justify-content: center; }
.view.on { background: #c6c6c6; }
.zoom { flex: none; width: 39px; display: flex; align-items: center; }
.minus { width: 10px; height: 2px; background: #7f7f7f; margin-left: 5px; }
.slide { width: 24px; height: 1px; background: #b4b4b4; margin-left: 4px; }

/* dialog */
.dialog {
  position: absolute; left: 978px; top: 359px; width: 490px; height: 145px; box-sizing: border-box;
  border: 1px solid #6e6e6e; background: #eee; box-shadow: 0 5px 16px rgba(0, 0, 0, .28);
  display: flex; flex-direction: column; color: #000;
}
.dtitle { flex: none; height: 37px; background: #fff; display: flex; align-items: center; justify-content: space-between; padding: 0 14px 2px 9px; box-sizing: border-box; font-size: 15px; }
.dbody { flex: 1; display: flex; flex-direction: column; align-items: center; }
.dmsg { align-self: stretch; box-sizing: border-box; display: flex; align-items: center; height: 69px; padding: 5px 0 0 16px; gap: 17px; font-size: 12.4px; white-space: nowrap; }
.dok { width: 73px; height: 28px; box-sizing: border-box; border: 2px solid #0078d7; background: #e1e1e1; text-align: center; line-height: 24px; font-size: 13px; }
</style>
